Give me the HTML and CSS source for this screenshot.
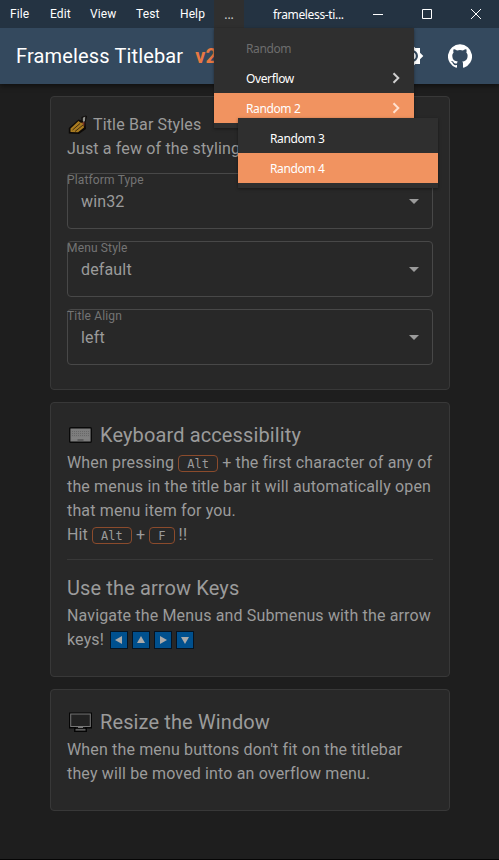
FILE: index.html
```html
<!DOCTYPE html>
<html lang="en">
<head>
<meta charset="utf-8">
<title>frameless-titlebar</title>
<link rel="stylesheet" href="styles.css">
</head>
<body>
<div class="window">
  <header class="titlebar">
    <nav class="menubar">
      <span class="menu-file">File</span><span class="menu-edit">Edit</span><span class="menu-view">View</span><span class="menu-test">Test</span><span class="menu-help">Help</span>
      <div class="menu-more">...
        <div class="dropdown">
          <div class="item disabled"><span>Random</span></div>
          <div class="item"><span>Overflow</span><svg class="chev" viewBox="0 0 8 12"><path d="M1.5 1.2 6.3 6 1.5 10.8"/></svg></div>
          <div class="item active"><span>Random 2</span><svg class="chev" viewBox="0 0 8 12"><path d="M1.5 1.2 6.3 6 1.5 10.8"/></svg>
            <div class="dropdown submenu">
              <div class="item"><span>Random 3</span></div>
              <div class="item active"><span>Random 4</span></div>
            </div>
          </div>
        </div>
      </div>
    </nav>
    <div class="title">frameless-ti...</div>
    <div class="controls">
      <svg viewBox="0 0 49 28"><path d="M15 14.5h10"/></svg>
      <svg viewBox="0 0 49 28"><path d="M15.5 9.5h9v9h-9z"/></svg>
      <svg viewBox="0 0 49 28"><path d="M15 9l10 10M25 9l-10 10"/></svg>
    </div>
  </header>
  <div class="appbar">
    <h1>Frameless Titlebar</h1><span class="version">v2</span>
    <div class="actions">
      <svg viewBox="0 0 24 24"><path fill-rule="evenodd" d="M20 8.69V4h-4.69L12 .69 8.69 4H4v4.69L.69 12 4 15.31V20h4.69L12 23.31 15.31 20H20v-4.69L23.31 12 20 8.69zM12 18a6 6 0 1 1 0-12 6 6 0 0 1 0 12z"/><circle cx="12" cy="12" r="3.8"/></svg>
      <svg viewBox="0 0 24 24"><path d="M12 .3a12 12 0 0 0-3.8 23.4c.6.1.8-.3.8-.6v-2c-3.3.7-4-1.6-4-1.6-.6-1.4-1.4-1.8-1.4-1.8-1-.7.1-.7.1-.7 1.2 0 1.9 1.2 1.9 1.2 1 1.8 2.8 1.3 3.5 1 0-.8.4-1.3.7-1.6-2.7-.3-5.5-1.3-5.5-6 0-1.2.5-2.3 1.3-3.1-.2-.4-.6-1.6 0-3.2 0 0 1-.3 3.4 1.2a11.5 11.5 0 0 1 6 0c2.3-1.5 3.3-1.2 3.3-1.2.6 1.6.2 2.8 0 3.2.9.8 1.3 1.9 1.3 3.2 0 4.6-2.8 5.6-5.5 5.9.5.4.9 1 .9 2.2v3.3c0 .3.1.7.8.6A12 12 0 0 0 12 .3"/></svg>
    </div>
  </div>
  <main>
    <section class="card">
      <p><svg class="nails" viewBox="0 0 20 20"><path d="M.8 18.500V13L10.500 4.500l3 1V2l4.500-1.500 1 1-1.500 6 .5 6.500-7 5z" fill="#0d0a08"/><path d="M2.500 13.500 10.500 6l1.800 1.500L15 8l1 4.500-6 4.700-7.500-.2z" fill="#a77a20"/><path d="m4.500 15 7.500-6.500M7 16.500l8-6.500" stroke="#35240c" stroke-width=".9"/><path d="m14 7.500 2.200 4 .3-4.500z" fill="#7c3428"/><path d="m14.800 2.700 2.500-1.200-.3 4-1.200 2-1-2z" fill="#92938f"/></svg>Title Bar Styles</p>
      <p>Just a few of the styling</p>
      <div class="selects">
        <div class="select"><label>Platform Type</label><div class="value">win32</div><i class="arrow"></i></div>
        <div class="select"><label>Menu Style</label><div class="value">default</div><i class="arrow"></i></div>
        <div class="select"><label>Title Align</label><div class="value">left</div><i class="arrow"></i></div>
      </div>
    </section>
    <section class="card">
      <h2><svg class="device" viewBox="0 0 24 20"><rect x=".7" y="2.700" width="21.600" height="14.600" rx="1" fill="#7d7d7d" stroke="#090909" stroke-width="1.400"/><path d="M3 6.500h17M3 8.500h17M3 10.500h17" stroke="#686868" stroke-dasharray="1 1"/><path d="M2.500 13h18" stroke="#858585"/><path d="M8.500 15h6" stroke="#555" stroke-width="1.500"/></svg>Keyboard accessibility</h2>
      <p>When pressing <kbd>Alt</kbd> + the first character of any of<br>the menus in the title bar it will automatically open<br>that menu item for you.<br>Hit <kbd>Alt</kbd> + <kbd>F</kbd> !!</p>
      <hr>
      <h2>Use the arrow Keys</h2>
      <p>Navigate the Menus and Submenus with the arrow<br>keys! <span class="keys"><svg viewBox="0 0 16 16"><path d="M4 8l7-4v8z"/></svg><svg viewBox="0 0 16 16"><path d="M8 4l4 7H4z"/></svg><svg viewBox="0 0 16 16"><path d="M12 8L5 4v8z"/></svg><svg viewBox="0 0 16 16"><path d="M8 12l4-7H4z"/></svg></span></p>
    </section>
    <section class="card">
      <h2><svg class="device" viewBox="0 0 24 20"><path d="M1 1.500h21v14h-5v3.500H6v-3.500H1z" fill="#111" stroke="#050505" stroke-width="2"/><rect x="1.700" y="2" width="19.600" height="12.500" fill="#222" stroke="#777"/><path d="M9 15.500h5M6.500 17.800h10" stroke="#777" stroke-width="1.200"/></svg>Resize the Window</h2>
      <p>When the menu buttons don't fit on the titlebar<br>they will be moved into an overflow menu.</p>
    </section>
  </main>
</div>
</body>
</html>
```
FILE: styles.css
```css
* { box-sizing: border-box; }
body { margin: 0; background: #1e1e1e; font: 16px/24px Roboto, sans-serif; }
.window { width: 499px; height: 860px; overflow: hidden; border-bottom: 1px solid #050505; }
.titlebar { display: flex; height: 28px; background: #243342; color: #fff; font-size: 12px; line-height: 28px; position: relative; z-index: 2; }
.menubar { display: flex; width: 244px; }
.menubar > span { padding-left: 10px; white-space: nowrap; letter-spacing: .1px; }
.menu-file { width: 40px; }
.menu-edit { width: 40px; }
.menu-view { width: 46px; }
.menu-test { width: 44px; }
.menu-help { width: 44px; }
.menu-more { position: relative; width: 30px; background: #2f2f2f; text-align: center; color: #ccc; font-family: "Noto Sans", sans-serif; line-height: 30px; height: 28px; }
.dropdown { position: absolute; left: 0; top: 28px; width: 200px; padding: 5px 0; background: #2f2f2f; box-shadow: 0 1px 3px rgba(0,0,0,.4); color: #fff; text-align: left; font: 12px/30px "Noto Sans", sans-serif; letter-spacing: -.38px; }
.item { position: relative; display: flex; justify-content: space-between; align-items: center; height: 30px; padding: 1px 14px 0 32px; }
.disabled { color: #6d6d6d; }
.active { background: #f19360; }
.submenu { left: 24px; top: 25px; }
.chev { width: 8px; height: 12px; margin-top: -2px; fill: none; stroke: #d0d0d0; stroke-width: 2; }
.active > .chev { stroke: #ffe0cf; }
.title { flex: 1; padding-left: 29px; font-family: "Noto Sans", sans-serif; letter-spacing: -.35px; line-height: 29px; white-space: nowrap; }
.controls { display: flex; width: 141px; overflow: hidden; }
.controls svg { width: 49px; height: 28px; flex: none; fill: none; stroke: #fff; stroke-width: 1; }
.appbar { position: relative; z-index: 1; display: flex; align-items: center; height: 56px; padding: 0 27px 0 16px; background: #34495e; box-shadow: 0 2px 5px rgba(0,0,0,.5); }
h1 { margin: 0; color: #fff; font-size: 20px; font-weight: 400; letter-spacing: .15px; }
.version { margin-left: 12px; color: #e97843; font-size: 20px; font-weight: 700; }
.actions { display: flex; gap: 24px; margin-left: auto; }
.actions svg { width: 24px; height: 24px; fill: #fff; }
main { display: flex; flex-direction: column; gap: 12px; padding: 12px 49px 0 50px; }
.card { padding: 16px 16px 24px; background: #282828; border: 1px solid #383838; border-radius: 4px; color: #9b9b9b; }
p { margin: 0; letter-spacing: .15px; white-space: nowrap; }
h2 { display: flex; align-items: center; margin: 0; height: 32px; font-size: 20px; font-weight: 400; letter-spacing: .12px; }
.nails { width: 20px; height: 20px; margin: 0 5px 0 1px; vertical-align: -5px; }
.device { width: 24px; height: 20px; margin: 0 7px 0 2px; }
.selects { display: grid; gap: 12px; margin-top: 12px; }
.select { display: grid; grid-template-columns: 1fr auto; grid-template-rows: 13px 28px; height: 56px; border: 1px solid #484848; border-radius: 4px; }
.select label { grid-column: 1 / -1; margin-left: -1px; font-size: 12px; line-height: 12px; letter-spacing: .15px; color: #747474; }
.value { padding-left: 13px; line-height: 30px; letter-spacing: .15px; }
.arrow { align-self: center; margin-right: 13px; border: 5px solid transparent; border-top-color: #9b9b9b; border-bottom: 0; }
kbd { display: inline-block; height: 17px; padding: 0 8px; border: 1px solid #8b4b2c; border-radius: 4px; font: 12px/16px "DejaVu Sans Mono", monospace; letter-spacing: 0; }
hr { height: 1px; margin: 12px 0; border: 0; background: #383838; }
.keys { display: inline-flex; gap: 4px; margin-left: 2px; vertical-align: -4px; }
.keys svg { width: 18px; height: 18px; background: #00508e; border: 1px solid #061422; fill: #aaa; }
```
